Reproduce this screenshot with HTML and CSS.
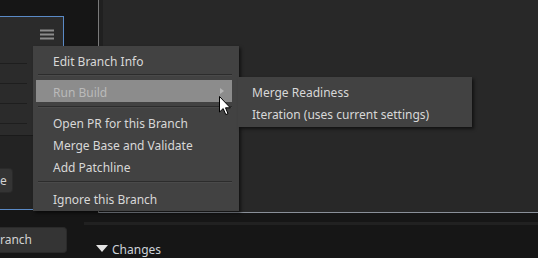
FILE: index.html
```html
<!DOCTYPE html>
<html>
<head>
<meta charset="utf-8">
<link rel="stylesheet" href="styles.css">
</head>
<body>
<div class="app">
  <div class="left-col">
    <div class="top-gap"></div>
    <div class="branch-panel">
      <div class="panel-head">
        <svg class="hamburger" width="14" height="11" viewBox="0 0 14 11">
          <rect x="0" y="0.5" width="14" height="2" fill="#8c8c8c"/>
          <rect x="0" y="4.5" width="14" height="2" fill="#8c8c8c"/>
          <rect x="0" y="8.5" width="14" height="2" fill="#8c8c8c"/>
        </svg>
      </div>
      <div class="row"></div>
      <div class="row"></div>
      <div class="row"></div>
      <div class="row row-short"></div>
      <div class="panel-foot">
        <button class="btn btn-e">e</button>
      </div>
    </div>
    <button class="btn btn-branch">ranch</button>
  </div>
  <div class="right-col">
    <div class="main-area">
      <div class="gutter"></div>
      <div class="divider"></div>
      <div class="content-pane"></div>
    </div>
    <div class="strip"></div>
    <div class="changes-row"><span class="tri"></span><span class="changes-label">Changes</span></div>
  </div>
</div>

<div class="menu">
  <div class="item">Edit Branch Info</div>
  <div class="sep sep-first"></div>
  <div class="item item-active"><span>Run Build</span><span class="arrow"></span></div>
  <div class="sep"></div>
  <div class="item">Open PR for this Branch</div>
  <div class="item">Merge Base and Validate</div>
  <div class="item">Add Patchline</div>
  <div class="sep sep-last"></div>
  <div class="item">Ignore this Branch</div>
</div>

<div class="submenu">
  <div class="sub-item">Merge Readiness</div>
  <div class="sub-item">Iteration (uses current settings)</div>
</div>

<svg class="cursor" width="13" height="20" viewBox="0 0 13 20">
  <path d="M0.5 0.5 L0.5 16 L4.2 12.6 L6.8 18.6 L9 17.6 L6.5 11.8 L11.3 11.8 Z" fill="#ffffff" stroke="#000000" stroke-width="1" stroke-linejoin="miter"/>
</svg>
</body>
</html>
```
FILE: styles.css
```css
* { box-sizing: border-box; }
html, body {
  margin: 0;
  padding: 0;
}
body {
  width: 538px;
  height: 258px;
  overflow: hidden;
  background: #161616;
  font-family: "Noto Sans", "Open Sans", sans-serif;
  font-size: 12px;
  color: #d6d6d6;
  position: relative;
}
.app {
  display: flex;
  height: 258px;
}
.left-col {
  width: 84px;
  flex: none;
  display: flex;
  flex-direction: column;
}
.top-gap { height: 16px; }
.branch-panel {
  width: 64px;
  height: 194px;
  border-top: 1px solid #5a8ac6;
  border-right: 1px solid #5a8ac6;
  border-bottom: 1px solid #5a8ac6;
  background: #2b2b2b;
  display: flex;
  flex-direction: column;
}
.panel-head {
  height: 46px;
  padding: 12px 0 0 40px;
}
.hamburger { display: block; }
.row {
  width: 27px;
  height: 20px;
  border-top: 1px solid #1e1e1e;
}
.row-short { height: 12px; }
.panel-foot {
  flex: 1;
  background: #232323;
  border-top: 1px solid #1a1a1a;
  padding-top: 32px;
}
.btn {
  font-family: "Noto Sans", "Open Sans", sans-serif;
  font-size: 12px;
  color: #d2d2d2;
  background: #343434;
  border: 1px solid #2a2a2a;
  padding: 0;
  display: block;
}
.btn-e {
  width: 13px;
  height: 25px;
  border-radius: 0 4px 4px 0;
  text-align: left;
  line-height: 22px;
  border-left: none;
}
.btn-branch {
  margin-top: 17px;
  width: 67px;
  height: 26px;
  border-radius: 0 4px 4px 0;
  border-left: none;
  text-align: left;
  line-height: 24px;
  padding-left: 0;
}
.right-col {
  flex: 1;
  display: flex;
  flex-direction: column;
}
.main-area {
  display: flex;
  height: 215px;
}
.gutter { width: 14px; }
.divider {
  width: 1px;
  background: #7a7a7a;
}
.content-pane {
  flex: 1;
  background: #282828;
  border-bottom: 1px solid #8a9099;
  box-shadow: inset 4px 0 0 #202020;
}
.strip {
  margin-top: 9px;
  height: 3px;
  background: #212121;
}
.changes-row {
  display: flex;
  align-items: center;
  padding-left: 12px;
  margin-top: 13px;
  height: 20px;
}
.tri {
  width: 0;
  height: 0;
  border-left: 6.5px solid transparent;
  border-right: 6.5px solid transparent;
  border-top: 7px solid #e4e4e4;
  margin-right: 4px;
  margin-top: 1px;
}
.changes-label {
  color: #cdd3da;
  line-height: 20px;
  padding-top: 3px;
}

.menu {
  position: absolute;
  left: 33px;
  top: 46px;
  width: 206px;
  height: 165px;
  background: #424242;
  box-shadow: 2px 2px 3px rgba(0, 0, 0, 0.55);
  padding: 4px 7px 0 3px;
}
.item {
  height: 22px;
  line-height: 20px;
  padding: 2px 0 0 17px;
  color: #d8d8d8;
  display: flex;
  justify-content: space-between;
  align-items: center;
}
.item-active {
  background: #8c8c8c;
  color: #bababa;
  padding-top: 3px;
}
.arrow {
  width: 0;
  height: 0;
  border-top: 3.5px solid transparent;
  border-bottom: 3.5px solid transparent;
  border-left: 4px solid #b4b4b4;
  margin-right: 8px;
  margin-top: -4px;
}
.sep {
  margin: 4px 0 5px 2px;
  height: 1px;
  background: #2c2c2c;
  box-shadow: 0 1px 0 #4a4a4a;
}
.sep-first { margin: 2px 0 5px 2px; }
.sep-last { margin: 3px 0 6px 2px; }

.submenu {
  position: absolute;
  left: 238px;
  top: 77px;
  width: 234px;
  height: 50px;
  background: #424242;
  box-shadow: 2px 2px 3px rgba(0, 0, 0, 0.55);
  padding-top: 4px;
}
.sub-item {
  height: 22px;
  line-height: 20px;
  padding: 2px 0 0 14px;
  color: #d8d8d8;
}
.cursor {
  position: absolute;
  left: 219px;
  top: 96px;
}
```
